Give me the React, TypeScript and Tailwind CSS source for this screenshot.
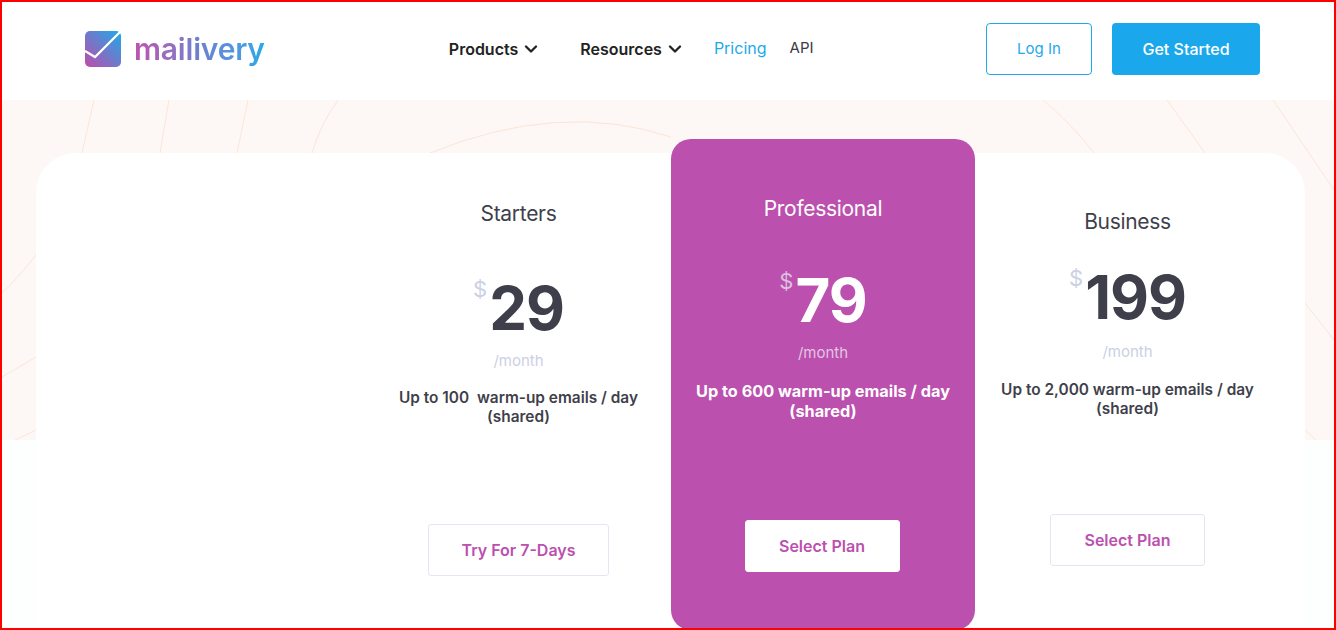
import { ChevronDown } from "lucide-react";

interface Plan {
  name: string;
  price: string;
  desc: string;
  cta: string;
  featured?: boolean;
  topClass: string;
  ctaClass: string;
  descClass: string;
  priceClass: string;
  monthClass: string;
  bodyClass: string;
}

const plans: Plan[] = [
  {
    name: "Starters",
    price: "29",
    desc: "Up to 100\u00a0 warm-up emails / day (shared)",
    cta: "Try For 7-Days",
    topClass: "pt-[47px]",
    priceClass: "mt-[45px]",
    monthClass: "mt-[8px]",
    descClass: "mt-[17px] text-[15.4px] leading-[19px] font-semibold",
    bodyClass: "w-[305px]",
    ctaClass: "mt-[98px] w-[181px]",
  },
  {
    name: "Professional",
    price: "79",
    desc: "Up to 600 warm-up emails / day (shared)",
    cta: "Select Plan",
    featured: true,
    topClass: "pt-[56px]",
    priceClass: "mt-[42px]",
    monthClass: "mt-[8px]",
    descClass: "mt-[18px] text-[16.3px] leading-5 font-bold",
    bodyClass: "w-[304px] -mt-[14px] rounded-t-[20px] rounded-b-[20px] bg-[#bb50ae] h-[491px]",
    ctaClass: "mt-[99px] -ml-[2px] w-[155px] border-white",
  },
  {
    name: "Business",
    price: "199",
    desc: "Up to 2,000 warm-up emails / day (shared)",
    cta: "Select Plan",
    topClass: "pt-[55px]",
    priceClass: "mt-[26px]",
    monthClass: "mt-[10px]",
    descClass: "mt-[18px] text-[15.4px] leading-[19px] font-semibold",
    bodyClass: "w-[305px]",
    ctaClass: "mt-[96px] w-[155px]",
  },
];

function Logo() {
  return (
    <div className="flex items-center gap-3">
      <svg width="37" height="36" viewBox="0 0 37 36">
        <defs>
          <linearGradient id="logoFill" x1="0" y1="1" x2="1" y2="0">
            <stop offset="0" stopColor="#c04bab" />
            <stop offset="1" stopColor="#1ea9ea" />
          </linearGradient>
        </defs>
        <rect x="0" y="0" width="36" height="36" rx="5" fill="url(#logoFill)" />
        <path d="M0 20 L10 26 L36 0" fill="none" stroke="#fff" strokeWidth="2.2" />
      </svg>
      <span className="bg-gradient-to-r from-[#bd50ad] via-[#6b80d0] to-[#1ea9ea] bg-clip-text font-['Inter',sans-serif] text-[30px] leading-9 font-semibold tracking-[-0.2px] text-transparent">
        mailivery
      </span>
    </div>
  );
}

function Header() {
  return (
    <header className="flex h-[98px] items-center bg-white pb-1 pl-[83px]">
      <Logo />
      <nav className="ml-[184px] flex items-center font-['Inter',sans-serif] text-[16px] text-[#222222]">
        <a className="flex items-center gap-[3px] font-semibold">
          Products <ChevronDown size={20} strokeWidth={2.8} />
        </a>
        <a className="ml-[39px] flex items-center gap-[3px] font-semibold">
          Resources <ChevronDown size={20} strokeWidth={2.8} />
        </a>
        <a className="ml-[29px] -mt-[2px] text-[16px] text-[#1ea9ea]">Pricing</a>
        <a className="ml-[23px] -mt-[2px] text-[15px] text-[#3a3a46]">API</a>
      </nav>
      <div className="ml-auto mr-[74px] flex items-center gap-5 font-['Inter',sans-serif] text-[15px]">
        <button className="h-[52px] w-[106px] rounded-[4px] border border-[#1ea9ea] bg-white text-[#1ea9ea]">
          Log In
        </button>
        <button className="h-[52px] w-[148px] rounded-[4px] bg-[#1aa7ec] text-[16px] font-medium text-white">
          Get Started
        </button>
      </div>
    </header>
  );
}

function PlanColumn({ plan }: { plan: Plan }) {
  const dark = plan.featured;
  return (
    <div className={`flex shrink-0 flex-col items-center text-center ${plan.bodyClass} ${plan.topClass}`}>
      <h3 className={`text-[21px] leading-7 tracking-[-0.3px] ${dark ? "text-white" : "text-[#3f3f4b]"}`}>
        {plan.name}
      </h3>
      <div className={`flex items-start ${plan.priceClass}`}>
        <span className={`mt-[2px] mr-[2px] text-[22px] leading-7 ${dark ? "text-[#dcc0e0]" : "text-[#ccd0e4]"}`}>$</span>
        <span className={`text-[60px] leading-[70px] font-bold tracking-[-1px] ${dark ? "text-white" : "text-[#3f3f4b]"}`}>
          {plan.price}
        </span>
      </div>
      <div className={`text-[15px] leading-5 ${plan.monthClass} ${dark ? "text-[#e2c5e4]" : "text-[#ccd0e4]"}`}>/month</div>
      <p className={`w-[280px] ${plan.descClass} ${dark ? "text-white" : "text-[#3f3f4b]"}`}>
        {plan.desc}
      </p>
      <button className={`h-[52px] rounded-[3px] border border-[#e6e6f2] bg-white text-[16px] font-semibold text-[#bb50ae] ${plan.ctaClass}`}>
        {plan.cta}
      </button>
    </div>
  );
}

function BackgroundLines() {
  return (
    <svg className="absolute top-[98px] left-0 h-[340px] w-[1332px]" viewBox="2 100 1332 340" fill="none" stroke="#fce5d6" strokeWidth="1">
      <path d="M94 100 L82 153" />
      <path d="M169 100 L160 153" />
      <path d="M248 100 L237 153" />
      <path d="M338 100 Q320 125 312 153" />
      <path d="M430 153 Q560 100 671 137" />
      <path d="M36 255 Q18 278 2 293" />
      <path d="M36 357 L2 377" />
      <path d="M36 430 L15 440" />
      <path d="M1043 100 Q1070 122 1094 153" />
      <path d="M1167 100 L1205 153" />
      <path d="M1273 100 L1334 190" />
      <path d="M1305 303 L1334 340" />
      <path d="M1305 430 L1316 440" />
    </svg>
  );
}

export default function App() {
  return (
    <div className="relative box-border h-[630px] w-[1336px] overflow-hidden border-2 border-[#ff0000] bg-[#fdfefe] font-['Inter',sans-serif]">
      <Header />
      <div className="absolute top-[98px] right-0 left-0 h-[340px] bg-[#fdf8f6]" />
      <BackgroundLines />
      <main className="relative mt-[53px] ml-[34px] flex h-[500px] w-[1269px] rounded-t-[40px] bg-white pl-[330px]">
        {plans.map((plan) => (
          <PlanColumn key={plan.name} plan={plan} />
        ))}
      </main>
    </div>
  );
}
